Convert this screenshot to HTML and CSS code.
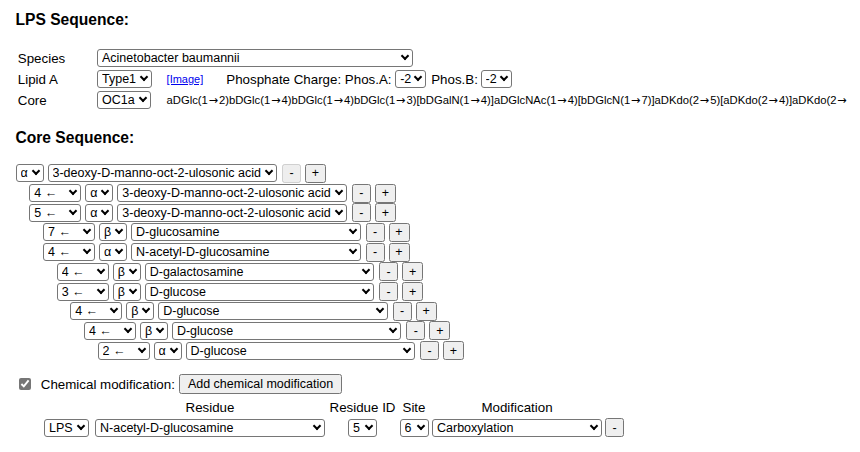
FILE: index.html
```html
<!DOCTYPE html>
<html>
<head>
<meta charset="utf-8">
<link rel="stylesheet" href="styles.css">
</head>
<body>
<div class="page">
  <h3 class="title">LPS Sequence:</h3>
  <div class="lps">
    <div class="lbl">Species</div>
    <div class="cell">
      <span class="sel w-species"><select><option>Acinetobacter baumannii</option></select></span>
    </div>
    <div class="lbl">Lipid A</div>
    <div class="cell">
      <span class="sel w-type"><select><option>Type1</option></select></span>
      <a class="imglink" href="#">[Image]</a>
      <span class="phos">Phosphate Charge: Phos.A:</span>
      <span class="sel w-charge"><select><option>-2</option></select></span>
      <span class="phosb">Phos.B:</span>
      <span class="sel w-charge"><select><option>-2</option></select></span>
    </div>
    <div class="lbl">Core</div>
    <div class="cell">
      <span class="sel w-core"><select><option>OC1a</option></select></span>
      <span class="coretext">aDGlc(1<span class="ar">→</span>2)bDGlc(1<span class="ar">→</span>4)bDGlc(1<span class="ar">→</span>4)bDGlc(1<span class="ar">→</span>3)[bDGalN(1<span class="ar">→</span>4)]aDGlcNAc(1<span class="ar">→</span>4)[bDGlcN(1<span class="ar">→</span>7)]aDKdo(2<span class="ar">→</span>5)[aDKdo(2<span class="ar">→</span>4)]aDKdo(2<span class="ar">→</span></span>
    </div>
  </div>

  <h3 class="title title2">Core Sequence:</h3>
  <div class="tree">
    <div class="row lv0">
      <span class="sel w-ano"><select><option>α</option></select></span>
      <span class="sel w-res"><select><option>3-deoxy-D-manno-oct-2-ulosonic acid</option></select></span>
      <button class="b-minus" disabled>-</button>
      <button class="b-plus">+</button>
    </div>
    <div class="row lv1">
      <span class="sel w-link"><select><option>4 ←</option></select></span>
      <span class="sel w-ano"><select><option>α</option></select></span>
      <span class="sel w-res"><select><option>3-deoxy-D-manno-oct-2-ulosonic acid</option></select></span>
      <button class="b-minus">-</button>
      <button class="b-plus">+</button>
    </div>
    <div class="row lv1">
      <span class="sel w-link"><select><option>5 ←</option></select></span>
      <span class="sel w-ano"><select><option>α</option></select></span>
      <span class="sel w-res"><select><option>3-deoxy-D-manno-oct-2-ulosonic acid</option></select></span>
      <button class="b-minus">-</button>
      <button class="b-plus">+</button>
    </div>
    <div class="row lv2">
      <span class="sel w-link"><select><option>7 ←</option></select></span>
      <span class="sel w-ano"><select><option>β</option></select></span>
      <span class="sel w-res"><select><option>D-glucosamine</option></select></span>
      <button class="b-minus">-</button>
      <button class="b-plus">+</button>
    </div>
    <div class="row lv2">
      <span class="sel w-link"><select><option>4 ←</option></select></span>
      <span class="sel w-ano"><select><option>α</option></select></span>
      <span class="sel w-res"><select><option>N-acetyl-D-glucosamine</option></select></span>
      <button class="b-minus">-</button>
      <button class="b-plus">+</button>
    </div>
    <div class="row lv3">
      <span class="sel w-link"><select><option>4 ←</option></select></span>
      <span class="sel w-ano"><select><option>β</option></select></span>
      <span class="sel w-res"><select><option>D-galactosamine</option></select></span>
      <button class="b-minus">-</button>
      <button class="b-plus">+</button>
    </div>
    <div class="row lv3">
      <span class="sel w-link"><select><option>3 ←</option></select></span>
      <span class="sel w-ano"><select><option>β</option></select></span>
      <span class="sel w-res"><select><option>D-glucose</option></select></span>
      <button class="b-minus">-</button>
      <button class="b-plus">+</button>
    </div>
    <div class="row lv4">
      <span class="sel w-link"><select><option>4 ←</option></select></span>
      <span class="sel w-ano"><select><option>β</option></select></span>
      <span class="sel w-res"><select><option>D-glucose</option></select></span>
      <button class="b-minus">-</button>
      <button class="b-plus">+</button>
    </div>
    <div class="row lv5">
      <span class="sel w-link"><select><option>4 ←</option></select></span>
      <span class="sel w-ano"><select><option>β</option></select></span>
      <span class="sel w-res"><select><option>D-glucose</option></select></span>
      <button class="b-minus">-</button>
      <button class="b-plus">+</button>
    </div>
    <div class="row lv6">
      <span class="sel w-link"><select><option>2 ←</option></select></span>
      <span class="sel w-ano"><select><option>α</option></select></span>
      <span class="sel w-res"><select><option>D-glucose</option></select></span>
      <button class="b-minus">-</button>
      <button class="b-plus">+</button>
    </div>
  </div>

  <div class="chem">
    <input type="checkbox" class="chk" checked>
    <span class="chemlbl">Chemical modification:</span>
    <button class="b-add">Add chemical modification</button>
  </div>

  <div class="mods">
    <div class="hd"></div>
    <div class="hd">Residue</div>
    <div class="hd">Residue ID</div>
    <div class="hd">Site</div>
    <div class="hd">Modification</div>
    <div class="hd"></div>

    <div class="md"><span class="sel w-lps"><select><option>LPS</option></select></span></div>
    <div class="md"><span class="sel w-mres"><select><option>N-acetyl-D-glucosamine</option></select></span></div>
    <div class="md"><span class="sel w-num"><select><option>5</option></select></span></div>
    <div class="md"><span class="sel w-num"><select><option>6</option></select></span></div>
    <div class="md"><span class="sel w-mod"><select><option>Carboxylation</option></select></span></div>
    <div class="md"><button class="b-minus">-</button></div>
  </div>
</div>
</body>
</html>
```

FILE: styles.css
```css
body {
  margin: 0;
  background: #ffffff;
  color: #000000;
  font-family: "Liberation Sans", Arial, sans-serif;
  font-size: 13.33px;
}

.page {
  padding: 11px 0 0 15.5px;
}

.title {
  margin: 0;
  font-size: 15.6px;
  line-height: 18px;
  font-weight: bold;
}

.title2 {
  margin-top: 18.2px;
}

select, button {
  font-family: "Liberation Sans", Arial, sans-serif;
  font-size: 12.5px;
  margin: 0;
  color: #000;
}

.sel {
  position: relative;
  display: inline-flex;
  flex: none;
  height: 18px;
}

.sel select {
  appearance: none;
  -webkit-appearance: none;
  box-sizing: border-box;
  width: 100%;
  height: 18px;
  padding: 0 13px 0 4px;
  border: 1px solid #767676;
  border-radius: 3px;
  background: #ffffff;
  line-height: 16px;
}

.sel::after {
  content: "";
  position: absolute;
  right: 5px;
  top: 4px;
  width: 6px;
  height: 6px;
  box-sizing: border-box;
  border-right: 2px solid #000;
  border-bottom: 2px solid #000;
  transform: rotate(45deg);
  pointer-events: none;
}

button {
  height: 19px;
  padding: 0;
  flex: none;
}

.lps {
  display: grid;
  grid-template-columns: 81.5px auto;
  grid-auto-rows: 21px;
  align-items: center;
  margin-top: 18.8px;
}

.lbl {
  padding-left: 2.3px;
}

.cell {
  display: flex;
  align-items: center;
  white-space: nowrap;
}

.w-species { width: 316px; }
.w-type { width: 55px; }
.w-core { width: 53.5px; }
.w-charge { width: 31px; }

.imglink {
  font-size: 11px;
  color: #0000ee;
  margin-left: 14.6px;
}

.phos {
  margin-left: 23px;
  margin-right: 3.7px;
}

.phosb {
  margin-left: 5px;
  margin-right: 2.7px;
}

.coretext {
  font-size: 11.25px;
  margin-left: 16px;
}

.ar {
  font-family: "DejaVu Sans", sans-serif;
  font-size: 11.25px;
  padding: 0 0.9px;
}

.tree {
  margin-top: 16.6px;
}

.row {
  display: flex;
  align-items: center;
  gap: 4px;
  height: 19.7px;
}

.lv0 { padding-left: 0; }
.lv1 { padding-left: 13.8px; }
.lv2 { padding-left: 27.5px; }
.lv3 { padding-left: 41.2px; }
.lv4 { padding-left: 54.7px; }
.lv5 { padding-left: 68.4px; }
.lv6 { padding-left: 82px; }

.w-link { width: 52px; }
.w-ano { width: 28px; }
.w-res { width: 229.5px; }

.b-minus {
  width: 19px;
  margin-left: 1px;
}

.b-plus {
  width: 21px;
}

.chem {
  display: flex;
  align-items: center;
  height: 21px;
  margin-top: 13.4px;
}

.chk {
  margin: 0 0 0 3.8px;
  width: 12px;
  height: 12px;
  accent-color: #767676;
}

.chemlbl {
  margin-left: 9.5px;
  margin-right: 4px;
}

.b-add {
  padding: 0 7px;
  height: 20px;
}

.mods {
  display: grid;
  grid-template-columns: 49px 232px 67px 30px 170px 19px;
  grid-template-rows: 20px 21px;
  column-gap: 3px;
  align-items: center;
  justify-items: center;
  margin-left: 26.5px;
  margin-top: 2.5px;
}

.hd {
  white-space: nowrap;
}

.md {
  display: flex;
  align-items: center;
}

.md .b-minus {
  margin-left: 0;
}

.w-lps { width: 45px; }
.w-mres { width: 230px; }
.w-num { width: 29px; }
.w-mod { width: 170px; }
```
